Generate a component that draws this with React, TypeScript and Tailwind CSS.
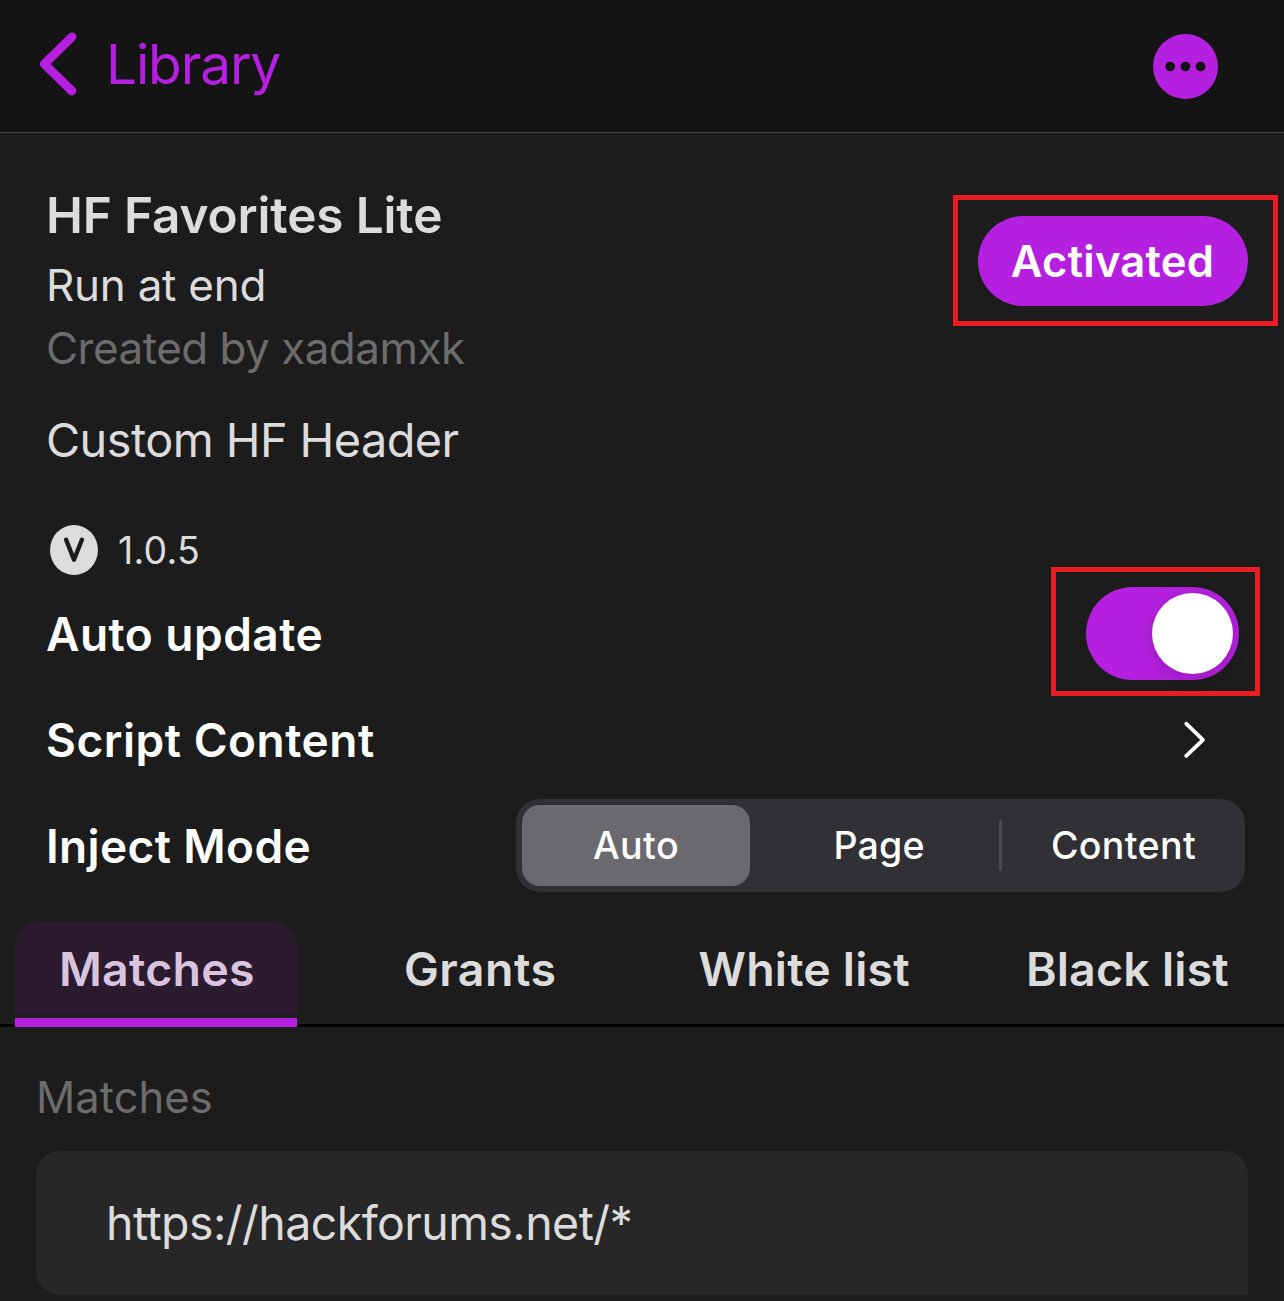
import type { ReactNode } from "react";

function BackIcon() {
  return (
    <svg width="38" height="64" viewBox="0 0 38 64" fill="none" className="shrink-0">
      <path
        d="M33 4.8 5.3 32 33 59"
        stroke="#b520e0"
        strokeWidth="8.8"
        strokeLinecap="round"
        strokeLinejoin="round"
      />
    </svg>
  );
}

function MoreIcon() {
  return (
    <svg width="65" height="65" viewBox="0 0 65 65" className="shrink-0">
      <circle cx="32.5" cy="32.5" r="32.5" fill="#b520e0" />
      <circle cx="17.2" cy="32.5" r="4.8" fill="#141414" />
      <circle cx="32.4" cy="32.5" r="4.8" fill="#141414" />
      <circle cx="47.6" cy="32.5" r="4.8" fill="#141414" />
    </svg>
  );
}

function VersionIcon() {
  return (
    <svg width="48" height="50" viewBox="0 0 48 50" className="shrink-0">
      <ellipse cx="24" cy="25" rx="24" ry="25" fill="#dcdcdc" />
      <path
        d="M16.1 14.8 24 34.8 31.9 14.8"
        fill="none"
        stroke="#1c1c1c"
        strokeWidth="4.4"
        strokeLinecap="round"
        strokeLinejoin="round"
      />
    </svg>
  );
}

function Highlight({ className, children }: { className: string; children: ReactNode }) {
  return <div className={`shrink-0 border-5 border-[#e91e25] ${className}`}>{children}</div>;
}

function Header() {
  return (
    <header className="flex h-[133px] items-start justify-between border-b border-[#3e3e40] bg-[#141414] pr-[66px] pl-[39px]">
      <div className="flex h-[128px] items-center text-[#b520e0]">
        <BackIcon />
        <span className="ml-[29px] pb-px text-[55px] leading-[64px] tracking-[-1.15px]">Library</span>
      </div>
      <div className="pt-[34px]">
        <MoreIcon />
      </div>
    </header>
  );
}

function Summary() {
  return (
    <section className="flex justify-between pr-[6px] pl-[46px] text-[#dcdcdc]">
      <div className="flex flex-col pt-[51px]">
        <h1 className="text-[49.5px] leading-[62px] font-semibold tracking-[-0.14px]">HF Favorites Lite</h1>
        <p className="mt-2 text-[44px] leading-[62px] tracking-[-0.26px]">Run at end</p>
        <p className="mt-px text-[44px] leading-[62px] tracking-[-0.52px] text-[#6c6c6c]">Created by xadamxk</p>
        <p className="mt-[30px] text-[46.8px] leading-[62px] tracking-[-0.56px]">Custom HF Header</p>
        <div className="mt-[54px] flex h-[50px] items-center gap-[20px] pl-1">
          <VersionIcon />
          <span className="pt-[2px] text-[37.5px] leading-[50px] tracking-[0.23px]">1.0.5</span>
        </div>
      </div>
      <Highlight className="mt-[62px] h-[131px] w-[325px] pt-4 pl-5">
        <button className="flex h-[90px] w-[270px] items-center justify-center rounded-full bg-[#b520e0] pt-[2px] pr-px text-[43.6px] font-semibold tracking-[0.22px] text-white">
          Activated
        </button>
      </Highlight>
    </section>
  );
}

const segments = [
  { label: "Auto", className: "w-[228px] rounded-[18px] bg-[#6a696f] tracking-[0.44px]" },
  { label: "Page", className: "w-[249px] pl-[9px] tracking-[0.14px]" },
  { label: "Content", className: "w-[237px] pl-[6px] tracking-[0.34px]" },
];

function Settings() {
  return (
    <section className="text-[46px] leading-[62px] font-semibold text-white">
      <div className="-mt-2 flex h-[129px] items-center justify-between pr-6 pl-[46px]">
        <span className="pt-1 tracking-[0.47px]">Auto update</span>
        <Highlight className="h-[129px] w-[209px] pt-[15px] pl-[30px]">
          <div className="flex h-[93px] w-[153px] items-center justify-end rounded-full bg-[#b520e0] pr-[6px]">
            <div className="size-[81px] rounded-full bg-white shadow-[0_4px_16px_rgba(0,0,0,0.16)]" />
          </div>
        </Highlight>
      </div>
      <div className="flex h-[88px] items-center justify-between pr-[77px] pl-[46px]">
        <span className="tracking-[0.52px]">Script Content</span>
        <svg width="24" height="38" viewBox="0 0 24 38" fill="none">
          <path
            d="M3.2 2.7 20 18.8 3.2 34.9"
            stroke="#ffffff"
            strokeWidth="3.8"
            strokeLinecap="round"
            strokeLinejoin="round"
          />
        </svg>
      </div>
      <div className="flex h-[124px] items-start justify-between pr-[39px] pl-[46px]">
        <span className="pt-[31px] tracking-[0.36px]">Inject Mode</span>
        <div className="mt-[15px] flex h-[93px] w-[729px] items-center rounded-[24px] bg-[#313035] pl-[6px] text-[37.6px] font-medium">
          {segments.map((s) => (
            <div key={s.label} className="flex items-center">
              {s.label === "Content" && <div className="h-[51px] w-[3px] rounded-full bg-[#4b4a50]" />}
              <div className={`flex h-[81px] items-center justify-center pt-px ${s.className}`}>{s.label}</div>
            </div>
          ))}
        </div>
      </div>
    </section>
  );
}

function Tabs() {
  return (
    <nav className="flex h-[119px] items-start border-b-3 border-black pt-[14px] pl-[15px] text-[46.5px] font-semibold text-[#dcdcdc]">
      <div className="z-10 flex h-[105px] w-[282px] shrink-0 flex-col text-[#d8c4de]">
        <div className="flex h-[93px] items-center rounded-t-[24px] bg-[#2c1a2f] pt-[2px] pl-[44px] tracking-[0.23px]">Matches</div>
        <div className="mt-[3px] h-[9px] bg-[#b520e0]" />
      </div>
      <div className="ml-[107px] flex h-[95px] items-center tracking-[0.49px]">Grants</div>
      <div className="ml-[142px] flex h-[95px] items-center whitespace-nowrap tracking-[0.18px]">White list</div>
      <div className="ml-[116px] flex h-[95px] items-center whitespace-nowrap tracking-[0.2px]">Black list</div>
    </nav>
  );
}

function MatchList() {
  return (
    <section className="px-9 pt-[39px]">
      <h2 className="text-[43.5px] leading-[62px] tracking-[0.05px] text-[#6c6c6c]">Matches</h2>
      <div className="mt-[23px] flex h-[144px] items-center rounded-[24px] rounded-br-none bg-[#272727] pt-[2px] pl-[70px] text-[46.5px] tracking-[-0.56px] text-[#dcdcdc]">
        https://hackforums.net/*
      </div>
    </section>
  );
}

export default function App() {
  return (
    <div className="h-[1301px] w-[1284px] overflow-hidden bg-[#1c1c1c] font-[Inter,sans-serif]">
      <Header />
      <Summary />
      <Settings />
      <Tabs />
      <MatchList />
    </div>
  );
}
